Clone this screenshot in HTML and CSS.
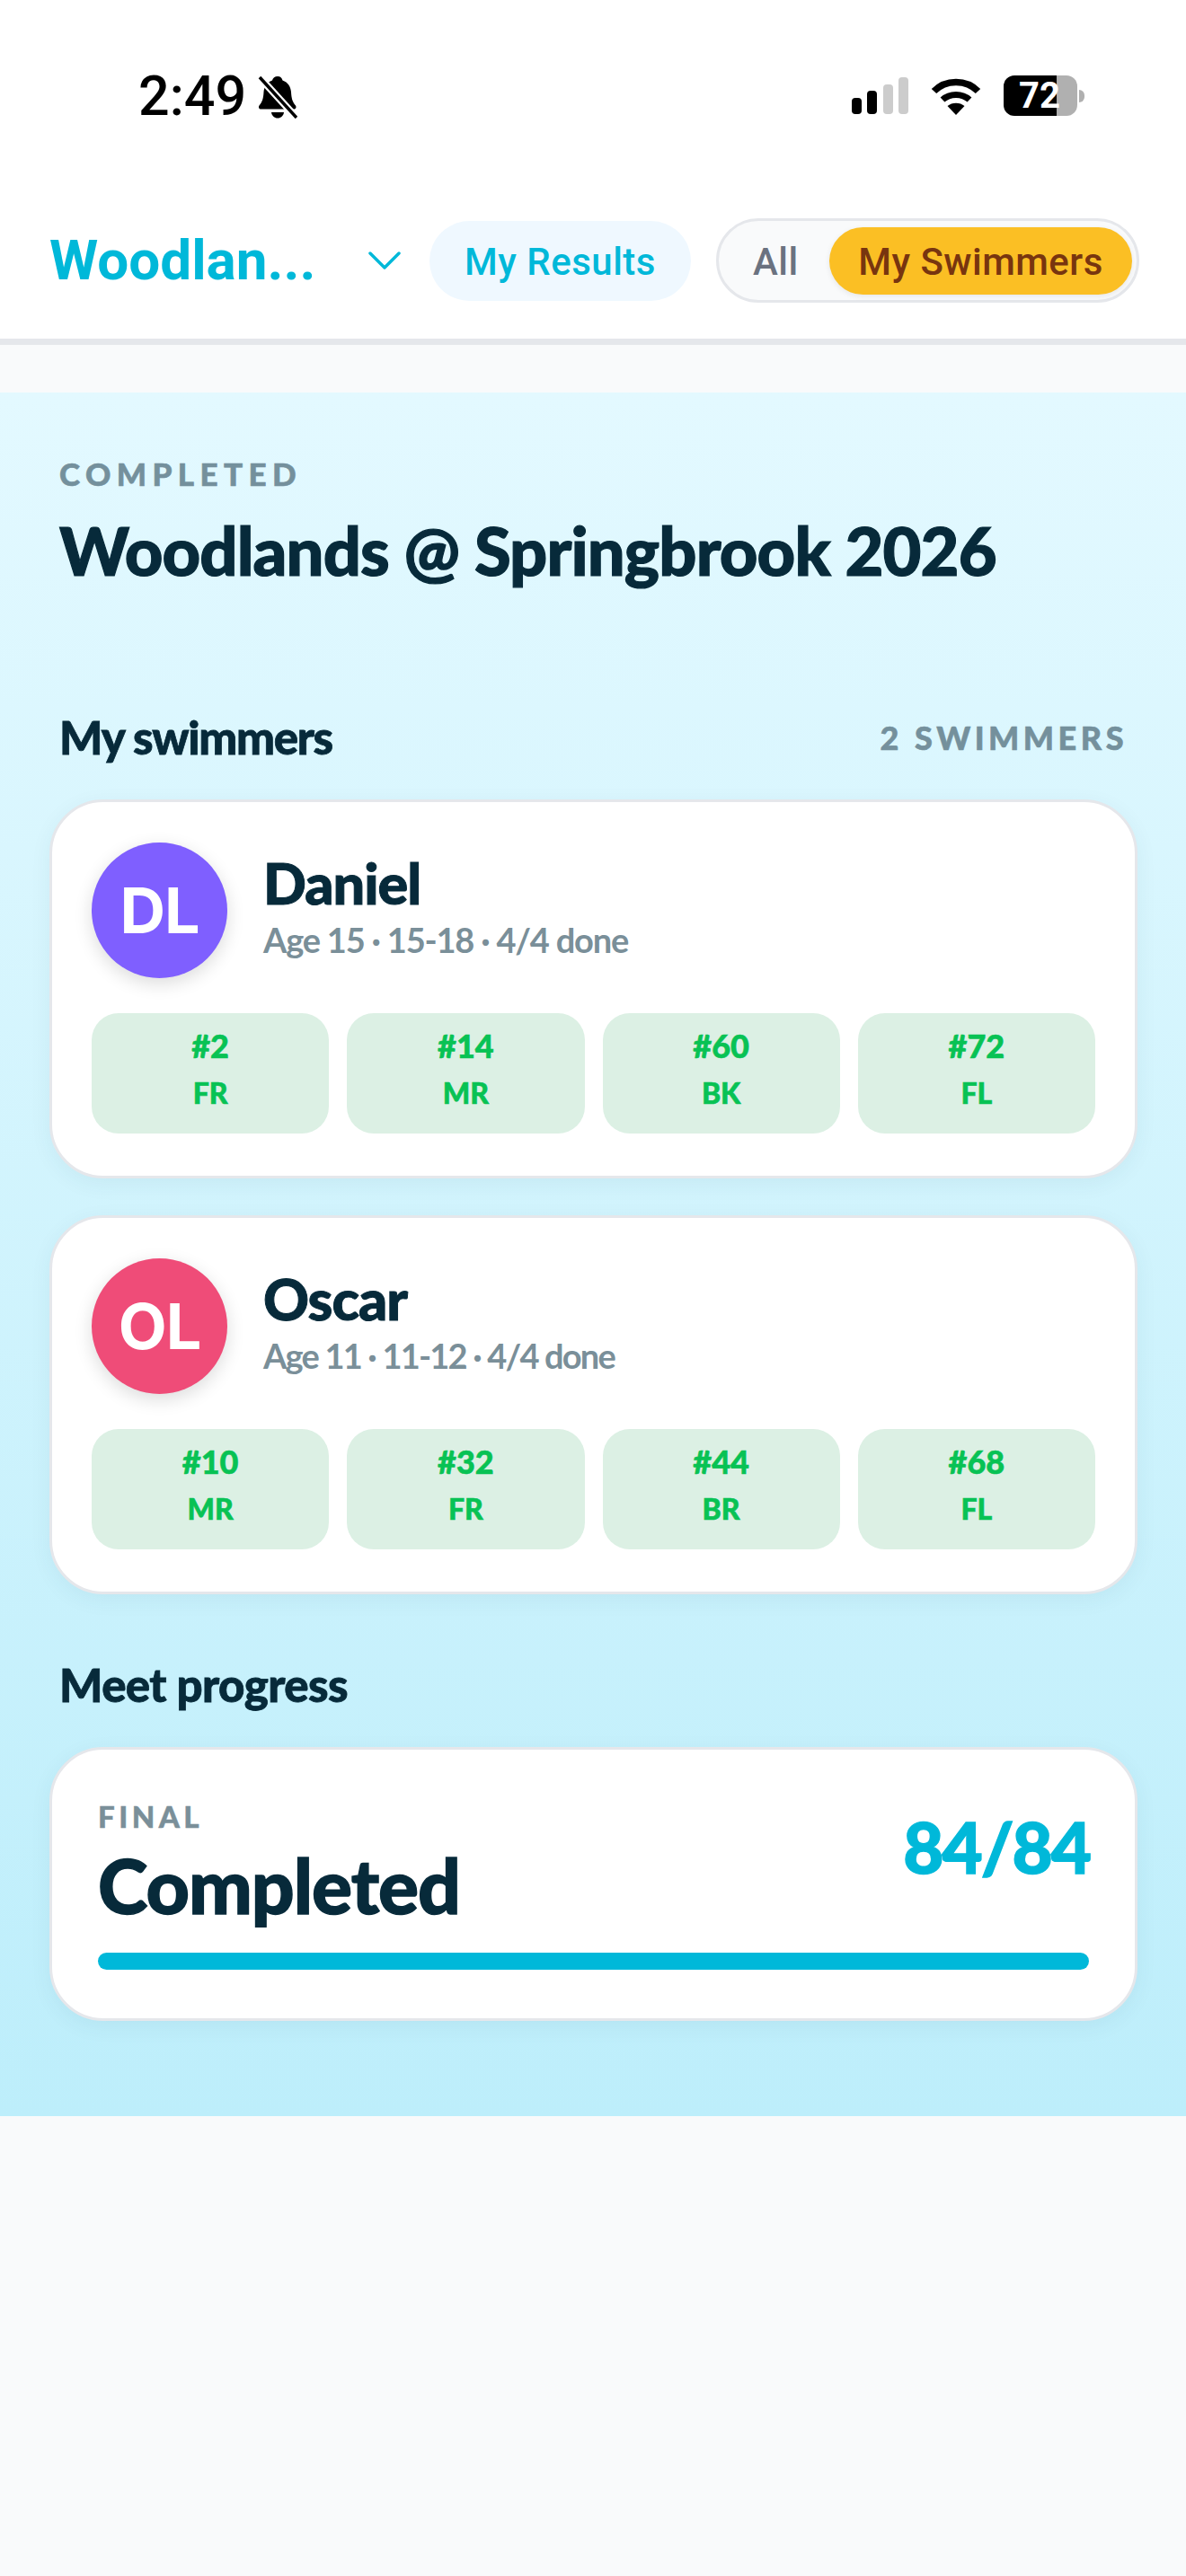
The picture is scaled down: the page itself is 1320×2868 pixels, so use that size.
FILE: index.html
```html
<!DOCTYPE html>
<html lang="en">
<head>
<meta charset="utf-8">
<title>Woodlands @ Springbrook 2026</title>
<link rel="stylesheet" href="styles.css">
</head>
<body>
<header class="topbar">
  <div class="status">
    <div class="status-left">
      <span class="time">2:49</span>
      <svg class="bell" viewBox="0 0 44 48" aria-hidden="true">
        <path d="M22 1c3 0 5 2 5.500 4.500 6 2 9 7 9.500 13 .4 7 1.500 11 5 15 1.200 2 .3 4-2 4H3.500c-2.300 0-3.200-2-2-4 3.500-4 4.600-8 5-15 .5-6 3.500-11 9.500-13C16.500 3 19 1 22 1z" fill="#000"/>
        <path d="M15 41h14c-.5 4-3.500 6.500-7 6.500S15.500 45 15 41z" fill="#000"/>
        <path d="M2 2 43 47" stroke="#fff" stroke-width="8"/>
        <path d="M2 2 43 47" stroke="#000" stroke-width="3.500"/>
      </svg>
    </div>
    <div class="status-right">
      <svg class="signal" viewBox="0 0 63 41" aria-hidden="true">
        <rect x="0" y="23" width="11" height="18" rx="4" fill="#000"/>
        <rect x="17" y="15" width="11" height="26" rx="4" fill="#000"/>
        <rect x="35" y="8" width="11" height="33" rx="4" fill="#ccc"/>
        <rect x="52" y="0" width="11" height="41" rx="4" fill="#ccc"/>
      </svg>
      <svg class="wifi" viewBox="0 0 56 42" aria-hidden="true">
        <path d="M3.500 15.500C16.500 2 39.500 2 52.500 15.500" fill="none" stroke="#000" stroke-width="7.500"/>
        <path d="M13 25c8-7.500 22-7.500 30 0" fill="none" stroke="#000" stroke-width="7"/>
        <path d="M18.500 32c5-4.500 14-4.500 19 0L28 42z" fill="#000"/>
      </svg>
      <div class="battery">
        <div class="battery-body"><span class="battery-text">72</span></div>
        <span class="battery-nub"></span>
      </div>
    </div>
  </div>
  <nav class="nav">
    <span class="meet-name">Woodlan...</span>
    <svg class="chevron" viewBox="0 0 36 22" aria-hidden="true"><path d="M2 3 18 19 34 3" fill="none" stroke="#00b8d9" stroke-width="3.500" stroke-linecap="round" stroke-linejoin="round"/></svg>
    <a class="results-pill">My Results</a>
    <div class="toggle">
      <span class="toggle-all">All</span>
      <span class="toggle-mine">My Swimmers</span>
    </div>
  </nav>
</header>

<main class="hero">
  <p class="eyebrow">COMPLETED</p>
  <h1 class="title">Woodlands @ Springbrook 2026</h1>

  <div class="section-head">
    <h2 class="section-title section-title-swimmers">My swimmers</h2>
    <span class="section-count">2 SWIMMERS</span>
  </div>

  <section class="card swimmer">
    <div class="swimmer-head">
      <div class="avatar avatar-purple">DL</div>
      <div class="swimmer-info">
        <div class="swimmer-name">Daniel</div>
        <div class="swimmer-sub">Age 15 · 15-18 · 4/4 done</div>
      </div>
    </div>
    <div class="chips">
      <div class="chip"><b>#2</b><span>FR</span></div>
      <div class="chip"><b>#14</b><span>MR</span></div>
      <div class="chip"><b>#60</b><span>BK</span></div>
      <div class="chip"><b>#72</b><span>FL</span></div>
    </div>
  </section>

  <section class="card swimmer">
    <div class="swimmer-head">
      <div class="avatar avatar-pink">OL</div>
      <div class="swimmer-info">
        <div class="swimmer-name">Oscar</div>
        <div class="swimmer-sub swimmer-sub-narrow">Age 11 · 11-12 · 4/4 done</div>
      </div>
    </div>
    <div class="chips">
      <div class="chip"><b>#10</b><span>MR</span></div>
      <div class="chip"><b>#32</b><span>FR</span></div>
      <div class="chip"><b>#44</b><span>BR</span></div>
      <div class="chip"><b>#68</b><span>FL</span></div>
    </div>
  </section>

  <h2 class="section-title progress-title">Meet progress</h2>

  <section class="card progress">
    <div class="progress-top">
      <div>
        <div class="progress-label">FINAL</div>
        <div class="progress-state">Completed</div>
      </div>
      <div class="progress-count">84/84</div>
    </div>
    <div class="bar"></div>
  </section>
</main>
</body>
</html>
```

FILE: styles.css
```css
* { box-sizing: border-box; }
html, body { margin: 0; padding: 0; }
body {
  width: 1320px;
  height: 2868px;
  overflow: hidden;
  background: #f9fafb;
  font-family: "Lato", "Liberation Sans", sans-serif;
  color: #072a3a;
}

/* top bar */
.topbar {
  height: 384px;
  background: #fff;
  border-bottom: 7px solid #e5e7eb;
}
.status {
  height: 243px;
  display: flex;
  justify-content: space-between;
  align-items: flex-start;
  padding: 84px 113px 0 154px;
}
.status-left { display: flex; align-items: flex-start; gap: 13px; }
.time {
  font-family: "Roboto", sans-serif;
  font-weight: 500;
  font-size: 61px;
  line-height: 47px;
  color: #000;
}
.bell { width: 44px; height: 48px; display: block; }
.status-right { display: flex; align-items: flex-start; gap: 25px; }
.signal { width: 63px; height: 41px; margin-top: 2px; display: block; }
.wifi { width: 56px; height: 42px; margin-top: 2px; display: block; }
.battery { display: flex; align-items: center; }
.battery-body {
  width: 82px;
  height: 45px;
  border-radius: 12px;
  background: linear-gradient(90deg, #000 72%, #b0b0b0 72%);
  display: flex;
  align-items: center;
  padding-left: 17px;
}
.battery-text {
  font-family: "Roboto", sans-serif;
  font-weight: 700;
  font-size: 40px;
  line-height: 45px;
  color: #fff;
}
.battery-nub {
  width: 6px;
  height: 14px;
  margin-left: 2px;
  border-radius: 0 7px 7px 0;
  background: #b0b0b0;
}

.nav {
  display: flex;
  align-items: center;
  padding-left: 55px;
  height: 94px;
}
.meet-name {
  width: 355px;
  font-family: "Roboto", sans-serif;
  font-weight: 700;
  font-size: 62px;
  line-height: 70px;
  color: #00b8d9;
}
.chevron { width: 36px; height: 22px; display: block; flex: none; }
.results-pill {
  margin-left: 32px;
  width: 291px;
  height: 89px;
  border-radius: 45px;
  background: #eff8ff;
  font-family: "Roboto", sans-serif;
  font-weight: 500;
  font-size: 42px;
  letter-spacing: .5px;
  padding-top: 2px;
  display: flex;
  align-items: center;
  justify-content: center;
  color: #00b8d9;
}
.toggle {
  margin-left: 28px;
  width: 471px;
  height: 94px;
  border: 3px solid #e5e7eb;
  border-radius: 47px;
  background: #f9fafb;
  display: flex;
  align-items: center;
  padding: 0 5px 0 38px;
  justify-content: space-between;
  font-family: "Roboto", sans-serif;
  font-weight: 500;
  font-size: 42px;
  letter-spacing: .5px;
}
.toggle-all { color: #6b7280; padding-top: 2px; }
.toggle-mine {
  width: 337px;
  height: 75px;
  border-radius: 38px;
  background: #fbbf24;
  color: #78350f;
  padding-top: 2px;
  display: flex;
  align-items: center;
  justify-content: center;
  box-shadow: 0 2px 6px rgba(0, 0, 0, .08);
}

/* hero */
.hero {
  margin-top: 53px;
  height: 1919px;
  background: linear-gradient(180deg, #e3f9ff 0%, #bdeefb 100%);
  padding: 72px 54px 0 55px;
}
.eyebrow {
  margin: 0 0 0 11px;
  font-weight: 900;
  font-size: 35px;
  line-height: 36px;
  letter-spacing: 6.400px;
  color: #74909c;
  -webkit-text-stroke: .6px #74909c;
}
.title {
  margin: 28px 0 0 11px;
  font-weight: 900;
  font-size: 74px;
  line-height: 80px;
  letter-spacing: -.9px;
  color: #072a3a;
  -webkit-text-stroke: 1.200px #072a3a;
}
.section-head {
  display: flex;
  justify-content: space-between;
  align-items: center;
  margin: 141px 0 42px 11px;
  padding-right: 11px;
  height: 54px;
}
.section-title {
  margin: 0;
  font-weight: 900;
  font-size: 51px;
  line-height: 54px;
  letter-spacing: -.6px;
  color: #072a3a;
  -webkit-text-stroke: .8px #072a3a;
}
.section-title-swimmers { letter-spacing: -1.300px; }
.section-count {
  font-weight: 900;
  font-size: 36px;
  letter-spacing: 4.500px;
  color: #74909c;
  -webkit-text-stroke: .6px #74909c;
}

.card {
  background: #fff;
  border: 3px solid #e5e7eb;
  border-radius: 60px;
  box-shadow: 0 6px 24px rgba(0, 60, 90, .06);
}
.swimmer {
  height: 422px;
  margin-bottom: 41px;
  padding: 45px 44px 0;
}
.swimmer-head { display: flex; align-items: center; gap: 41px; height: 151px; }
.avatar {
  width: 151px;
  height: 151px;
  border-radius: 50%;
  flex: none;
  color: #fff;
  font-family: "Inter", sans-serif;
  font-weight: 700;
  font-size: 70px;
  letter-spacing: -1px;
  display: flex;
  align-items: center;
  justify-content: center;
  box-shadow: 0 6px 20px rgba(0, 0, 0, .14);
}
.avatar-purple { background: #7f5fff; }
.avatar-pink { background: #ef4c78; }
.swimmer-info { margin-top: -8px; margin-left: -1px; }
.swimmer-name {
  font-weight: 900;
  font-size: 63px;
  line-height: 64px;
  letter-spacing: -1px;
  color: #072a3a;
  -webkit-text-stroke: 1px #072a3a;
}
.swimmer-sub {
  margin-top: 8px;
  font-weight: 700;
  font-size: 38px;
  line-height: 46px;
  letter-spacing: -1.200px;
  color: #7a8f99;
}
.swimmer-sub-narrow { letter-spacing: -1.800px; }
.chips {
  margin-top: 39px;
  display: grid;
  grid-template-columns: repeat(4, 1fr);
  gap: 20px;
}
.chip {
  height: 134px;
  border-radius: 30px;
  background: #dcf0e4;
  color: #08c254;
  display: flex;
  flex-direction: column;
  align-items: center;
  padding-top: 16px;
  -webkit-text-stroke: .6px #08c254;
}
.chip b { font-weight: 900; font-size: 36px; line-height: 40px; }
.chip span { font-weight: 900; font-size: 32px; line-height: 38px; margin-top: 14px; }

.progress-title { margin: 74px 0 42px 11px; }
.progress { height: 305px; padding: 54px 51px 0; }
.progress-top { display: flex; justify-content: space-between; align-items: flex-start; height: 172px; }
.progress-label {
  font-weight: 900;
  font-size: 33px;
  line-height: 40px;
  letter-spacing: 4.500px;
  color: #7a8f99;
  -webkit-text-stroke: .5px #7a8f99;
}
.progress-state {
  margin-top: 11px;
  font-weight: 900;
  font-size: 84px;
  line-height: 92px;
  letter-spacing: -1px;
  color: #072a3a;
  -webkit-text-stroke: 1.400px #072a3a;
}
.progress-count {
  margin-top: 12px;
  margin-right: -1px;
  font-weight: 900;
  font-size: 78px;
  line-height: 84px;
  letter-spacing: -2px;
  color: #00b8d9;
  -webkit-text-stroke: 1.400px #00b8d9;
}
.bar { height: 19px; border-radius: 10px; background: #00b8d9; }
```
